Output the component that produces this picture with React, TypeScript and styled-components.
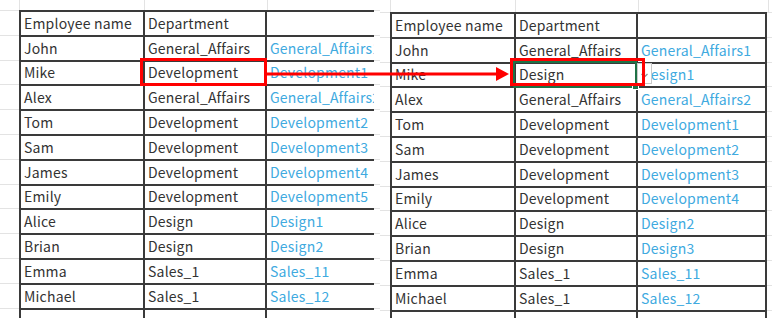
import React from "react";
import styled, { createGlobalStyle } from "styled-components";

const GlobalStyle = createGlobalStyle`
  html, body {
    margin: 0;
    padding: 0;
    background: #fff;
  }
  body {
    font-family: "Noto Sans CJK JP", "Noto Sans", sans-serif;
  }
`;

type Row = [string, string, string];

const ROW_H = 24.8;

const before: Row[] = [
  ["Employee name", "Department", ""],
  ["John", "General_Affairs", "General_Affairs1"],
  ["Mike", "Development", "Development1"],
  ["Alex", "General_Affairs", "General_Affairs2"],
  ["Tom", "Development", "Development2"],
  ["Sam", "Development", "Development3"],
  ["James", "Development", "Development4"],
  ["Emily", "Development", "Development5"],
  ["Alice", "Design", "Design1"],
  ["Brian", "Design", "Design2"],
  ["Emma", "Sales_1", "Sales_11"],
  ["Michael", "Sales_1", "Sales_12"],
  ["", "", ""],
];

const after: Row[] = [
  ["Employee name", "Department", ""],
  ["John", "General_Affairs", "General_Affairs1"],
  ["Mike", "Design", "Design1"],
  ["Alex", "General_Affairs", "General_Affairs2"],
  ["Tom", "Development", "Development1"],
  ["Sam", "Development", "Development2"],
  ["James", "Development", "Development3"],
  ["Emily", "Development", "Development4"],
  ["Alice", "Design", "Design2"],
  ["Brian", "Design", "Design3"],
  ["Emma", "Sales_1", "Sales_11"],
  ["Michael", "Sales_1", "Sales_12"],
  ["", "", ""],
];

const Page = styled.div`
  position: relative;
  width: 772px;
  height: 318px;
  display: flex;
  overflow: hidden;
  background: #fff;
`;

// one excel capture: faint grid behind, the bordered table on top
const Sheet = styled.div<{ $width: number; $lead: number; $top: number }>`
  width: ${(p) => p.$width}px;
  height: 318px;
  flex: none;
  overflow: hidden;
  display: grid;
  grid-template-columns: ${(p) => p.$lead}px 1fr;
  grid-template-rows: ${(p) => p.$top}px 1fr;
  background-image: repeating-linear-gradient(
    to bottom,
    #e3e3e3 0 1px,
    transparent 1px ${ROW_H}px
  );
  background-position: 0 ${(p) => p.$top}px;
`;

const Corner = styled.div`
  background: #fff;
`;

const ColumnStub = styled.div`
  display: flex;
  background: #fff;
`;

const StubCell = styled.div<{ $w: number }>`
  flex: none;
  width: ${(p) => p.$w}px;
  border-left: 1px solid #e3e3e3;
`;

const Lead = styled.div``;

const Table = styled.div<{ $cols: string; $width?: number }>`
  display: grid;
  grid-template-columns: ${(p) => p.$cols};
  grid-auto-rows: ${ROW_H}px;
  align-self: start;
  width: ${(p) => (p.$width ? `${p.$width}px` : "max-content")};
  overflow: hidden;
  background: #fff;
  border-top: 2px solid #3a3a3a;
  border-left: 2px solid #3a3a3a;
`;

const Cell = styled.div<{ $link?: boolean }>`
  box-sizing: border-box;
  display: flex;
  align-items: center;
  padding: 0 0 1px 3px;
  border-right: 2px solid #3a3a3a;
  border-bottom: 2px solid #3a3a3a;
  font-size: 14px;
  letter-spacing: 0.2px;
  color: ${(p) => (p.$link ? "#40aadf" : "#333")};
  white-space: nowrap;
  overflow: hidden;
`;

const RedBox = styled.div<{ $x: number; $y: number; $w: number; $h: number }>`
  position: absolute;
  left: ${(p) => p.$x}px;
  top: ${(p) => p.$y}px;
  width: ${(p) => p.$w}px;
  height: ${(p) => p.$h}px;
  box-sizing: border-box;
  border: 3px solid #ff0000;
  pointer-events: none;
`;

const Selection = styled.div`
  position: absolute;
  left: 513px;
  top: 61px;
  width: 124px;
  height: 27px;
  box-sizing: border-box;
  border: 2px solid #1f7246;

  &::after {
    content: "";
    position: absolute;
    right: -4px;
    bottom: -4px;
    width: 5px;
    height: 5px;
    background: #1f7246;
    border: 1px solid #fff;
  }
`;

const FillButton = styled.div`
  position: absolute;
  left: 637px;
  top: 63px;
  width: 15px;
  height: 21px;
  box-sizing: border-box;
  background: #fff;
  border: 1px solid #c9c9c9;
  display: flex;
  align-items: center;
  justify-content: center;
`;

const ArrowSvg = styled.svg`
  position: absolute;
  left: 265px;
  top: 64px;
`;

interface SheetProps {
  rows: Row[];
  lead: number;
  top: number;
  width: number;
  cols: number[];
  clip?: number;
}

const SheetView = ({ rows, lead, top, width, cols, clip }: SheetProps) => (
  <Sheet $width={width} $lead={lead} $top={top}>
    <Corner />
    <ColumnStub>
      {cols.map((w, i) => (
        <StubCell key={i} $w={w} />
      ))}
      <StubCell $w={200} />
    </ColumnStub>
    <Lead />
    <Table $cols={cols.map((c) => `${c}px`).join(" ")} $width={clip}>
      {rows.map((r, i) => (
        <React.Fragment key={i}>
          <Cell>{r[0]}</Cell>
          <Cell>{r[1]}</Cell>
          <Cell $link={i > 0}>{r[2]}</Cell>
        </React.Fragment>
      ))}
    </Table>
  </Sheet>
);

export default function App() {
  return (
    <>
      <GlobalStyle />
      <Page>
        <SheetView rows={before} lead={19} top={10} width={380} cols={[124, 122, 150]} clip={353} />
        <SheetView rows={after} lead={10} top={12} width={392} cols={[124, 122, 129]} />

        <Selection />
        <FillButton>
          <svg width="9" height="12" viewBox="0 0 9 12">
            <path d="M4.5 1v8M1.5 6l3 3 3-3" stroke="#8a8a8a" strokeWidth="1.2" fill="none" />
          </svg>
        </FillButton>
        <RedBox $x={140} $y={58} $w={127} $h={28} />
        <RedBox $x={510} $y={58} $w={135} $h={28} />
        <ArrowSvg width="246" height="20" viewBox="0 0 246 20">
          <line x1="0" y1="10" x2="234" y2="10" stroke="#ff0000" strokeWidth="3" />
          <polygon points="231,3 244,10 231,17" fill="#ff0000" />
        </ArrowSvg>
      </Page>
    </>
  );
}
